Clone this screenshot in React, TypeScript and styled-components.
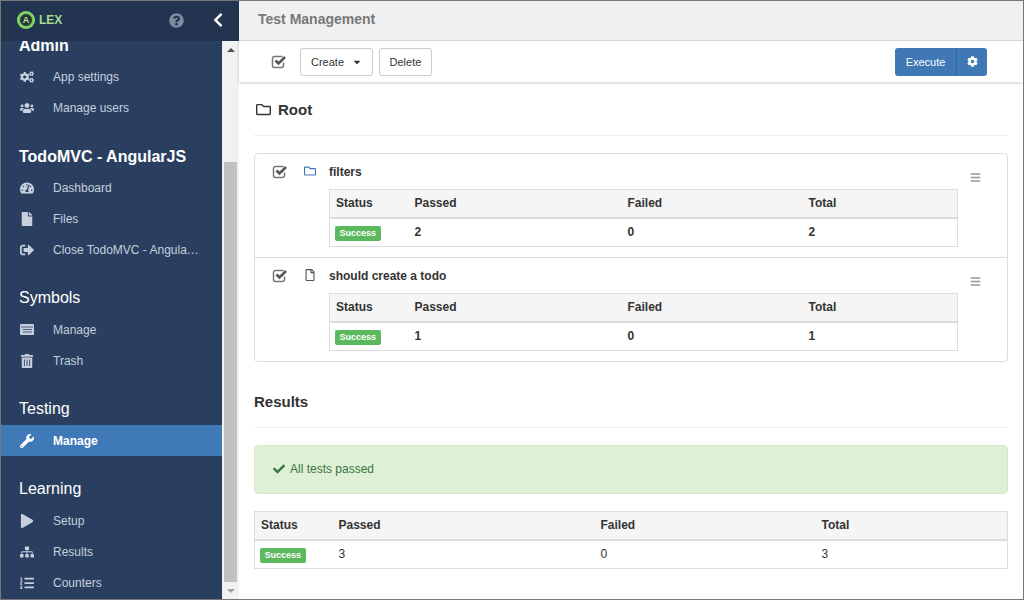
import styled, { createGlobalStyle } from 'styled-components';
import type { ReactNode } from 'react';
import {
  FaBars,
  FaCaretDown,
  FaCheck,
  FaChevronLeft,
  FaCog,
  FaCogs,
  FaFile,
  FaListOl,
  FaPlay,
  FaQuestionCircle,
  FaRegFile,
  FaRegFolder,
  FaSignOutAlt,
  FaSitemap,
  FaTachometerAlt,
  FaTrashAlt,
  FaUsers,
  FaWrench,
} from 'react-icons/fa';

const GlobalStyle = createGlobalStyle`
  html, body {
    margin: 0;
    padding: 0;
    background: #fff;
  }
  body {
    font-family: "Liberation Sans", Arial, sans-serif;
    font-size: 12px;
    color: #333;
  }
  * {
    box-sizing: border-box;
  }
`;

const Shell = styled.div`
  width: 1024px;
  height: 600px;
  display: flex;
  border: 1px solid #777;
  overflow: hidden;
`;

const Side = styled.aside`
  width: 238px;
  flex: none;
  display: flex;
  flex-direction: column;
`;

const Brand = styled.div`
  height: 40px;
  flex: none;
  display: flex;
  align-items: center;
  padding: 0 13px 2px 16px;
  background: #22344f;
  color: #fff;
`;

const LogoMark = styled.span`
  width: 18px;
  height: 18px;
  border-radius: 50%;
  display: flex;
  align-items: center;
  justify-content: center;
  background: radial-gradient(circle closest-side, #26352f 0 60%, #6fcb5f 72%, #93e07f 100%);
  color: #bfe3b4;
  font-size: 9px;
  font-weight: bold;
`;

const LogoText = styled.span`
  margin-left: 4px;
  font-size: 12px;
  font-weight: bold;
  color: #a5dc93;
`;

const HelpIcon = styled(FaQuestionCircle)`
  margin-left: auto;
  font-size: 15px;
  color: #7f8ba0;
`;

const CollapseIcon = styled(FaChevronLeft)`
  margin-left: 26px;
  font-size: 16px;
  color: #fff;
`;

const SideBody = styled.div`
  flex: 1;
  min-height: 0;
  display: flex;
`;

const Nav = styled.nav`
  width: 221px;
  flex: none;
  overflow: hidden;
  background: #2a3f5f;
`;

const NavScroll = styled.div`
  margin-top: -6px;
`;

const NavGroup = styled.section`
  padding-bottom: 23px;
`;

const NavTitle = styled.div<{ $bold?: boolean }>`
  height: 22px;
  padding-left: 18px;
  margin-bottom: 4px;
  line-height: ${({ $bold }) => ($bold ? '22px' : '20px')};
  font-size: 16px;
  font-weight: ${({ $bold }) => ($bold ? 'bold' : 'normal')};
  color: #fff;
`;

const NavItem = styled.a<{ $active?: boolean }>`
  height: 31px;
  display: flex;
  align-items: center;
  padding-left: 19px;
  color: ${({ $active }) => ($active ? '#fff' : '#c5cfdd')};
  font-weight: ${({ $active }) => ($active ? 'bold' : 'normal')};
  background: ${({ $active }) => ($active ? '#4079b8' : 'transparent')};
`;

const NavIcon = styled.span`
  width: 33px;
  flex: none;
  display: flex;
  align-items: center;
  font-size: 14px;
`;

const NavLabel = styled.span`
  width: 148px;
  white-space: nowrap;
  overflow: hidden;
  text-overflow: ellipsis;
`;

const Scrollbar = styled.div`
  width: 17px;
  flex: none;
  display: flex;
  flex-direction: column;
  background: #f1f1f1;
`;

const ScrollArrow = styled.div<{ $down?: boolean }>`
  height: 17px;
  flex: none;
  display: flex;
  align-items: center;
  justify-content: center;

  &::before {
    content: '';
    border-left: 4px solid transparent;
    border-right: 4px solid transparent;
    ${({ $down }) => ($down ? 'border-top: 4px solid #a3a3a3;' : 'border-bottom: 4px solid #505050;')}
  }
`;

const ScrollTrack = styled.div`
  flex: 1;
  padding: 104px 2px 0;
  display: flex;
`;

const ScrollThumb = styled.div`
  flex: 1;
  background: #c1c1c1;
`;

const Main = styled.main`
  flex: 1;
  min-width: 0;
  display: flex;
  flex-direction: column;
`;

const TitleBar = styled.header`
  height: 40px;
  flex: none;
  display: flex;
  align-items: center;
  padding: 0 0 4px 19px;
  background: #f0f0f0;
  border-bottom: 1px solid #ddd;
  font-size: 14px;
  font-weight: bold;
  color: #777;
`;

const Toolbar = styled.div`
  height: 41px;
  flex: none;
  display: flex;
  align-items: center;
  padding: 0 36px 0 32px;
  background: #fff;
  box-shadow: 0 1px 3px rgba(0, 0, 0, 0.2);
`;

const CheckBox = ({ className }: { className?: string }) => (
  <svg className={className} width="16" height="15" viewBox="0 0 16 15" fill="none" aria-hidden="true">
    <path d="M12.5 8.5v3a2 2 0 0 1-2 2h-7a2 2 0 0 1-2-2v-7a2 2 0 0 1 2-2h8" stroke="#777" strokeWidth="1.5" />
    <path d="M4.5 6.5l3 3 6.5-6.5" stroke="#555" strokeWidth="2.6" />
  </svg>
);

const ListAltIcon = () => (
  <svg width="14" height="11" viewBox="0 0 14 11" aria-hidden="true">
    <rect width="14" height="11" rx="1" fill="#c5cfdd" />
    <path d="M1 3h12M3 5.5h9M3 8h9" stroke="#4a5d7a" strokeWidth="1" />
  </svg>
);

const SelectIcon = styled(CheckBox)`
  flex: none;
  margin-right: 13px;
`;

const ToolButton = styled.button<{ $wide?: boolean }>`
  height: 28px;
  padding: 0 ${({ $wide }) => ($wide ? '10px' : '9.5px')};
  margin-right: 6px;
  display: flex;
  align-items: center;
  gap: ${({ $wide }) => ($wide ? '8px' : '0')};
  background: #fff;
  border: 1px solid #ccc;
  border-radius: 3px;
  font: inherit;
  font-size: 11px;
  color: #333;
`;

const ExecuteGroup = styled.div`
  margin-left: auto;
  display: flex;
  height: 28px;
  border-radius: 3px;
  overflow: hidden;
  background: #3f78b5;
  color: #fff;
`;

const ExecuteButton = styled.div`
  width: 62px;
  display: flex;
  align-items: center;
  justify-content: center;
  font-size: 11px;
  border-right: 1px solid #35689f;
`;

const ExecuteCog = styled.div`
  width: 30px;
  display: flex;
  align-items: center;
  justify-content: center;
  font-size: 11px;
`;

const Content = styled.div`
  flex: 1;
  min-height: 0;
  padding: 0 15px;
`;

const SectionTitle = styled.h2`
  margin: 0;
  height: 54px;
  padding-top: 2px;
  display: flex;
  align-items: center;
  gap: 7px;
  border-bottom: 1px solid #eee;
  font-size: 15px;
  font-weight: bold;
  color: #333;

  svg {
    margin-left: 2px;
    font-size: 15px;
  }
`;

const Panel = styled.div`
  margin-top: 17px;
  border: 1px solid #ddd;
  border-radius: 4px;
`;

const PanelRow = styled.div`
  display: flex;
  padding: 10px 0 10px 17px;

  & + & {
    border-top: 1px solid #ddd;
  }
`;

const RowCheck = styled(CheckBox)`
  flex: none;
`;

const RowType = styled.span`
  width: 12px;
  margin: 1px 13px 0 16px;
  flex: none;
  display: flex;
  font-size: 12px;
  color: #3f78b5;
`;

const RowFile = styled(RowType)`
  color: #555;
`;

const RowBody = styled.div`
  width: 629px;
  flex: none;
`;

const RowName = styled.div`
  height: 17px;
  line-height: 17px;
  margin-bottom: 8px;
  font-weight: bold;
  font-size: 12px;
`;

const RowMenu = styled(FaBars)`
  margin: 8px 0 0 12px;
  font-size: 11px;
  color: #999;
`;

const StatsTable = styled.table`
  width: 100%;
  table-layout: fixed;
  border-collapse: collapse;
  border: 1px solid #ddd;
  font-size: 12px;

  th {
    height: 28px;
    padding: 0 6px;
    text-align: left;
    background: #f5f5f5;
    border-bottom: 2px solid #ddd;
  }

  td {
    height: 29px;
    padding: 0 6px;
  }

  td:first-child {
    padding: 2px 6px 0 5px;
  }
`;

const BoldCell = styled.td`
  font-weight: bold;
`;

const Badge = styled.span`
  display: inline-block;
  height: 15px;
  line-height: 15px;
  padding: 0 4.5px;
  border-radius: 2px;
  background: #5cb85c;
  color: #fff;
  font-size: 9px;
  font-weight: bold;
`;

const Alert = styled.div`
  margin-top: 17px;
  height: 49px;
  display: flex;
  align-items: center;
  gap: 5px;
  padding: 0 0 2px 18px;
  background: #dff0d8;
  border: 1px solid #d6e9c6;
  border-radius: 4px;
  color: #3c763d;
  font-size: 12px;

  svg {
    font-size: 12px;
  }
`;

const ResultsTable = styled(StatsTable)`
  margin-top: 17px;
`;

const ResultsTitle = styled(SectionTitle)`
  margin-top: 14px;
  height: 52px;
  padding-top: 0;
`;

type Stats = { passed: number; failed: number; total: number };

const STAT_HEAD = ['Status', 'Passed', 'Failed', 'Total'];

function TableHead() {
  return (
    <thead>
      <tr>
        {STAT_HEAD.map((h) => (
          <th key={h}>{h}</th>
        ))}
      </tr>
    </thead>
  );
}

function NestedStats({ passed, failed, total }: Stats) {
  return (
    <StatsTable>
      <colgroup>
        <col width="79" />
        <col width="213" />
        <col width="181" />
        <col />
      </colgroup>
      <TableHead />
      <tbody>
        <tr>
          <td>
            <Badge>Success</Badge>
          </td>
          <BoldCell>{passed}</BoldCell>
          <BoldCell>{failed}</BoldCell>
          <BoldCell>{total}</BoldCell>
        </tr>
      </tbody>
    </StatsTable>
  );
}

function Item({ icon, active, children }: { icon: ReactNode; active?: boolean; children: ReactNode }) {
  return (
    <NavItem $active={active}>
      <NavIcon>{icon}</NavIcon>
      <NavLabel>{children}</NavLabel>
    </NavItem>
  );
}

export default function App() {
  return (
    <>
      <GlobalStyle />
      <Shell>
        <Side>
          <Brand>
            <LogoMark>A</LogoMark>
            <LogoText>LEX</LogoText>
            <HelpIcon />
            <CollapseIcon />
          </Brand>
          <SideBody>
            <Nav>
              <NavScroll>
                <NavGroup>
                  <NavTitle $bold>Admin</NavTitle>
                  <Item icon={<FaCogs />}>App settings</Item>
                  <Item icon={<FaUsers />}>Manage users</Item>
                </NavGroup>
                <NavGroup>
                  <NavTitle $bold>TodoMVC - AngularJS</NavTitle>
                  <Item icon={<FaTachometerAlt />}>Dashboard</Item>
                  <Item icon={<FaFile />}>Files</Item>
                  <Item icon={<FaSignOutAlt />}>Close TodoMVC - AngularJS</Item>
                </NavGroup>
                <NavGroup>
                  <NavTitle>Symbols</NavTitle>
                  <Item icon={<ListAltIcon />}>Manage</Item>
                  <Item icon={<FaTrashAlt />}>Trash</Item>
                </NavGroup>
                <NavGroup>
                  <NavTitle>Testing</NavTitle>
                  <Item icon={<FaWrench />} active>
                    Manage
                  </Item>
                </NavGroup>
                <NavGroup>
                  <NavTitle>Learning</NavTitle>
                  <Item icon={<FaPlay />}>Setup</Item>
                  <Item icon={<FaSitemap />}>Results</Item>
                  <Item icon={<FaListOl />}>Counters</Item>
                </NavGroup>
              </NavScroll>
            </Nav>
            <Scrollbar>
              <ScrollArrow />
              <ScrollTrack>
                <ScrollThumb />
              </ScrollTrack>
              <ScrollArrow $down />
            </Scrollbar>
          </SideBody>
        </Side>
        <Main>
          <TitleBar>Test Management</TitleBar>
          <Toolbar>
            <SelectIcon />
            <ToolButton $wide>
              Create <FaCaretDown size={10} />
            </ToolButton>
            <ToolButton>Delete</ToolButton>
            <ExecuteGroup>
              <ExecuteButton>Execute</ExecuteButton>
              <ExecuteCog>
                <FaCog />
              </ExecuteCog>
            </ExecuteGroup>
          </Toolbar>
          <Content>
            <SectionTitle>
              <FaRegFolder />
              Root
            </SectionTitle>
            <Panel>
              <PanelRow>
                <RowCheck />
                <RowType>
                  <FaRegFolder />
                </RowType>
                <RowBody>
                  <RowName>filters</RowName>
                  <NestedStats passed={2} failed={0} total={2} />
                </RowBody>
                <RowMenu />
              </PanelRow>
              <PanelRow>
                <RowCheck />
                <RowFile>
                  <FaRegFile />
                </RowFile>
                <RowBody>
                  <RowName>should create a todo</RowName>
                  <NestedStats passed={1} failed={0} total={1} />
                </RowBody>
                <RowMenu />
              </PanelRow>
            </Panel>
            <ResultsTitle>Results</ResultsTitle>
            <Alert>
              <FaCheck />
              All tests passed
            </Alert>
            <ResultsTable>
              <colgroup>
                <col width="78" />
                <col width="262" />
                <col width="221" />
                <col />
              </colgroup>
              <TableHead />
              <tbody>
                <tr>
                  <td>
                    <Badge>Success</Badge>
                  </td>
                  <td>3</td>
                  <td>0</td>
                  <td>3</td>
                </tr>
              </tbody>
            </ResultsTable>
          </Content>
        </Main>
      </Shell>
    </>
  );
}
